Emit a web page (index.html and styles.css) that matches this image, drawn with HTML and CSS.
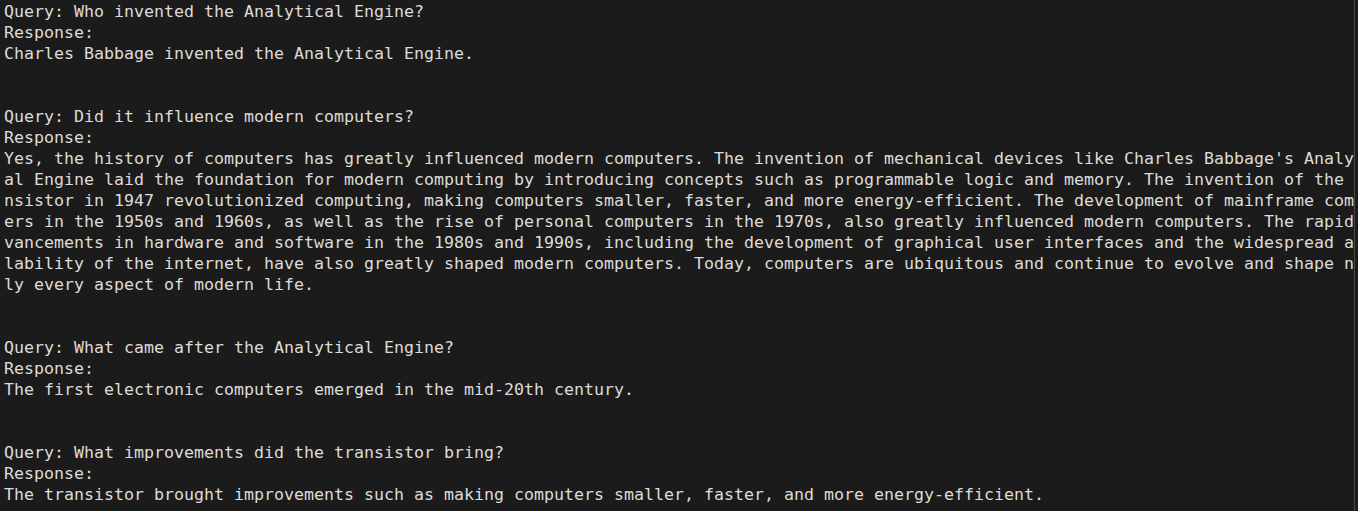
FILE: index.html
```html
<!DOCTYPE html>
<html lang="en">
<head>
<meta charset="utf-8">
<title>Terminal</title>
<link rel="stylesheet" href="styles.css">
</head>
<body>
<div class="window">
  <main class="term">
    <section class="entry">
      <div class="line">Query: Who invented the Analytical Engine?</div>
      <div class="line">Response:</div>
      <div class="line">Charles Babbage invented the Analytical Engine.</div>
    </section>
    <section class="entry">
      <div class="line">Query: Did it influence modern computers?</div>
      <div class="line">Response:</div>
      <div class="line">Yes, the history of computers has greatly influenced modern computers. The invention of mechanical devices like Charles Babbage's Analy</div>
      <div class="line">al Engine laid the foundation for modern computing by introducing concepts such as programmable logic and memory. The invention of the</div>
      <div class="line">nsistor in 1947 revolutionized computing, making computers smaller, faster, and more energy-efficient. The development of mainframe com</div>
      <div class="line">ers in the 1950s and 1960s, as well as the rise of personal computers in the 1970s, also greatly influenced modern computers. The rapid</div>
      <div class="line">vancements in hardware and software in the 1980s and 1990s, including the development of graphical user interfaces and the widespread a</div>
      <div class="line">lability of the internet, have also greatly shaped modern computers. Today, computers are ubiquitous and continue to evolve and shape n</div>
      <div class="line">ly every aspect of modern life.</div>
    </section>
    <section class="entry">
      <div class="line">Query: What came after the Analytical Engine?</div>
      <div class="line">Response:</div>
      <div class="line">The first electronic computers emerged in the mid-20th century.</div>
    </section>
    <section class="entry">
      <div class="line">Query: What improvements did the transistor bring?</div>
      <div class="line">Response:</div>
      <div class="line">The transistor brought improvements such as making computers smaller, faster, and more energy-efficient.</div>
    </section>
  </main>
  <div class="edge"></div>
</div>
</body>
</html>
```

FILE: styles.css
```css
html, body {
  margin: 0;
  padding: 0;
  background: #1b1b1b;
  height: 100%;
  overflow: hidden;
}

.window {
  display: flex;
  height: 511px;
  background: #1b1b1b;
}

.term {
  width: 1350px;
  padding: 1px 0 0 4px;
  font-family: "DejaVu Sans Mono", "Liberation Mono", monospace;
  font-size: 16.61px;
  line-height: 21px;
  color: #dcdcdc;
}

.entry {
  display: flex;
  flex-direction: column;
}

.entry + .entry {
  margin-top: 42px;
}

.line {
  white-space: pre;
  height: 21px;
}

.edge {
  width: 1px;
  height: 511px;
  background: #4a4a4a;
  flex: none;
}
```
